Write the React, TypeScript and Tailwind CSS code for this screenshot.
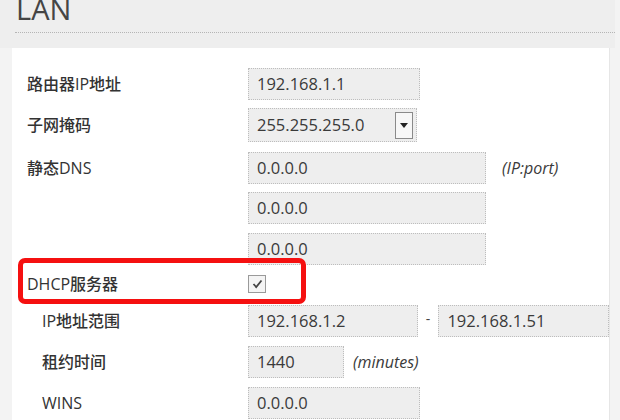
import React from "react";

const font = { fontFamily: '"Open Sans", "Noto Sans CJK SC", sans-serif' };

function Field({ w, value, className = "" }: { w: string; value: string; className?: string }) {
  return (
    <div
      className={`h-[32px] ${w} ${className} border border-dotted border-[#bdbdbd] bg-[#eeeeee] flex items-center pl-[8px] text-[16.5px] text-[#3a3a3a]`}
    >
      {value}
    </div>
  );
}

function Label({ text, indent = false }: { text: string; indent?: boolean }) {
  return (
    <div
      className={`w-[236px] shrink-0 ${indent ? "pl-[30px]" : "pl-[15px]"} text-[16px] font-medium text-[#333333]`}
    >
      {text}
    </div>
  );
}

export default function App() {
  return (
    <div className="w-[620px] h-[420px] overflow-hidden bg-[#f3f3f3] relative" style={font}>
      <div className="h-[48px] w-[615px] bg-[#eeeeee] relative">
        <div className="absolute left-[16px] top-[-11px] text-[29px] leading-[40px] font-medium text-[#454545]">LAN</div>
        <div className="absolute left-[15px] right-0 top-[32px] border-t border-dotted border-[#b5b5b5]"></div>
      </div>
      <div className="ml-[12px] w-[598px] h-[372px] bg-white relative flex flex-col pt-[20px] border-r border-[#e6e6e6]">
        <div className="flex items-center">
          <Label text="路由器IP地址" />
          <Field w="w-[172px]" value="192.168.1.1" />
        </div>
        <div className="flex items-center mt-[8px]">
          <Label text="子网掩码" />
          <div className="h-[34px] w-[169px] border border-dotted border-[#bdbdbd] bg-[#eeeeee] flex items-center justify-between pl-[8px] pr-[3px] text-[16.5px] text-[#3a3a3a]">
            <span>255.255.255.0</span>
            <div className="w-[18px] h-[27px] border border-[#8a8a8a] bg-[#f7f7f7] flex items-center justify-center">
              <svg width="8" height="5" viewBox="0 0 8 5">
                <path d="M0 0 L8 0 L4 5 Z" fill="#222" />
              </svg>
            </div>
          </div>
        </div>
        <div className="flex items-center mt-[10px]">
          <Label text="静态DNS" />
          <Field w="w-[238px]" value="0.0.0.0" />
          <span className="ml-[16px] italic text-[16px] text-[#3a3a3a]">(IP:port)</span>
        </div>
        <div className="flex items-center mt-[8px]">
          <div className="w-[236px] shrink-0"></div>
          <Field w="w-[238px]" value="0.0.0.0" />
        </div>
        <div className="flex items-center mt-[9px]">
          <div className="w-[236px] shrink-0"></div>
          <Field w="w-[238px]" value="0.0.0.0" />
        </div>
        <div className="flex items-center mt-[10px] h-[17px]">
          <Label text="DHCP服务器" />
          <div className="w-[18px] h-[18px] border border-[#9a9a9a] bg-[#f4f4f4] flex items-center justify-center">
            <svg width="11" height="10" viewBox="0 0 11 10">
              <path d="M1.5 5 L4.2 8 L9.5 1.5" fill="none" stroke="#444" strokeWidth="1.8" />
            </svg>
          </div>
        </div>
        <div className="flex items-center mt-[13px]">
          <Label text="IP地址范围" indent />
          <Field w="w-[171px]" value="192.168.1.2" />
          <span className="w-[21px] text-center text-[14px] text-[#444] -mt-[6px]">-</span>
          <Field w="w-[172px]" value="192.168.1.51" />
        </div>
        <div className="flex items-center mt-[9px]">
          <Label text="租约时间" indent />
          <Field w="w-[96px]" value="1440" />
          <span className="ml-[9px] italic text-[16px] text-[#3a3a3a]">(minutes)</span>
        </div>
        <div className="flex items-center mt-[9px]">
          <Label text="WINS" indent />
          <Field w="w-[172px]" value="0.0.0.0" />
        </div>
        <div className="absolute left-[6px] top-[210px] w-[288px] h-[46px] border-[5px] border-[#f51010] rounded-[7px] pointer-events-none"></div>
      </div>
    </div>
  );
}
